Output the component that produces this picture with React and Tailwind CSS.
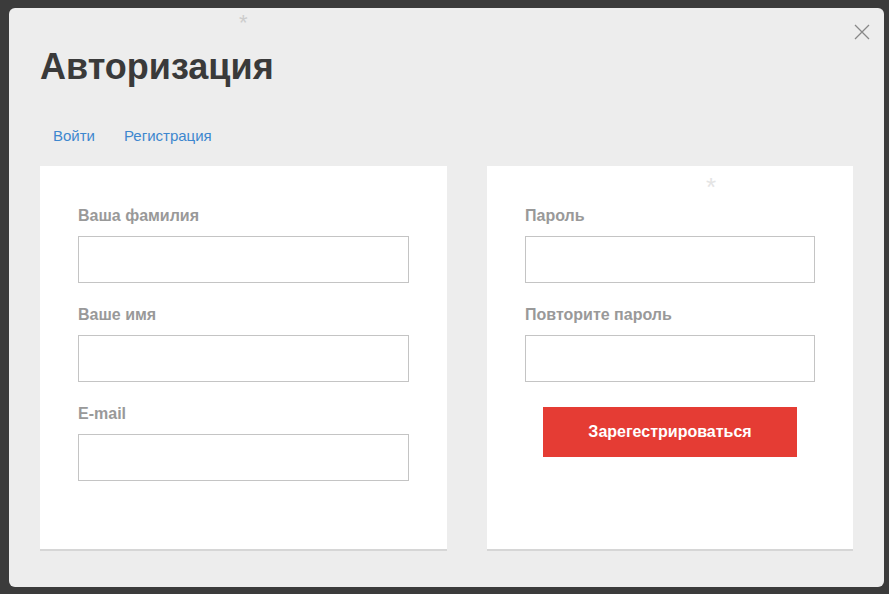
export default function App() {
  const Field = ({ label }) => (
    <div className="mb-[22px]">
      <div className="text-[16px] leading-[20px] font-bold text-[#999] mb-[10px]">{label}</div>
      <div className="h-[47px] border border-[#c4c4c4] bg-white" />
    </div>
  );

  return (
    <div className="w-[889px] h-[594px] bg-[#3b3b3b] pt-[8px] pl-[9px] overflow-hidden" style={{ fontFamily: '"Liberation Sans", Arial, sans-serif' }}>
      <div className="relative w-[875px] h-[579px] bg-[#ededed] rounded-[6px] px-[31px]">
        <button className="absolute right-[10px] top-[12px] w-[24px] h-[24px] flex items-center justify-center">
          <svg width="16" height="16" viewBox="0 0 16 16" stroke="#888" strokeWidth="1.3">
            <path d="M1 1 L15 15 M15 1 L1 15" />
          </svg>
        </button>
        <span className="absolute left-[230px] top-[-2px] text-[22px] text-[#ccc]">*</span>
        <span className="absolute left-[697px] top-[160px] text-[26px] text-[#e4e4e4]">*</span>
        <h1 className="pt-[38px] text-[36px] leading-[42px] font-bold text-[#3a3a3a]">Авторизация</h1>
        <div className="flex gap-[29px] mt-[37px] pl-[13px] text-[15px] text-[#3d87cf]">
          <span>Войти</span>
          <span>Регистрация</span>
        </div>
        <div className="flex gap-[40px] mt-[18px]">
          <div className="w-[407px] h-[383px] bg-white shadow-[0_2px_0_#d6d6d6] px-[38px] pt-[40px]">
            <Field label="Ваша фамилия" />
            <Field label="Ваше имя" />
            <Field label="E-mail" />
          </div>
          <div className="w-[366px] h-[383px] bg-white shadow-[0_2px_0_#d6d6d6] px-[38px] pt-[40px]">
            <Field label="Пароль" />
            <Field label="Повторите пароль" />
            <div className="flex justify-center mt-[25px]">
              <button className="w-[254px] h-[50px] bg-[#e53c34] text-white font-bold text-[16px]">Зарегестрироваться</button>
            </div>
          </div>
        </div>
      </div>
    </div>
  );
}
